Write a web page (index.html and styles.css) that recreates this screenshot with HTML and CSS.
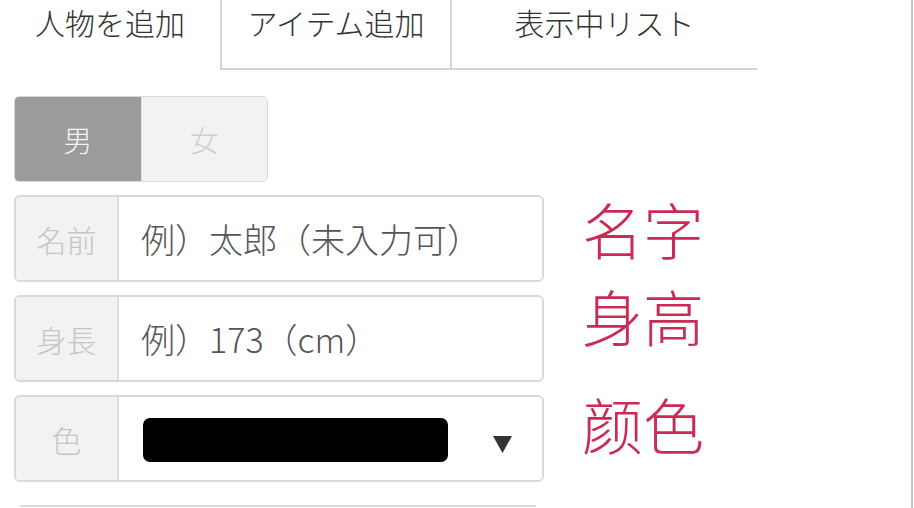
FILE: index.html
```html
<!DOCTYPE html>
<html lang="ja">
<head>
<meta charset="utf-8">
<title>人物を追加</title>
<link rel="stylesheet" href="styles.css">
</head>
<body>
<div class="page">
  <nav class="tabs">
    <div class="tab tab-active">人物を追加</div>
    <div class="tab tab-item">アイテム追加</div>
    <div class="tab tab-list">表示中リスト</div>
  </nav>

  <main class="form">
    <div class="toggle">
      <div class="seg seg-on">男</div>
      <div class="seg seg-off">女</div>
    </div>

    <div class="row">
      <div class="label">名前</div>
      <div class="field">例）太郎（未入力可）</div>
    </div>

    <div class="row">
      <div class="label">身長</div>
      <div class="field">例）173（cm）</div>
    </div>

    <div class="row">
      <div class="label">色</div>
      <div class="field field-select">
        <span class="swatch"></span>
        <svg class="caret" width="19" height="17" viewBox="0 0 19 17"><polygon points="0,0 19,0 9.5,17" fill="#333"/></svg>
      </div>
    </div>

    <div class="next"></div>
  </main>

  <div class="notes">
    <div class="note note-1" lang="zh-CN">名字</div>
    <div class="note note-2" lang="zh-CN">身高</div>
    <div class="note note-3" lang="zh-CN">颜色</div>
  </div>
</div>
</body>
</html>
```

FILE: styles.css
```css
* { box-sizing: border-box; }

html, body {
  margin: 0;
  padding: 0;
  background: #fff;
}

body {
  font-family: "Noto Sans CJK JP", "Noto Sans", sans-serif;
  font-weight: 300;
  color: #333;
}

.page {
  position: relative;
  width: 913px;
  height: 508px;
  overflow: hidden;
  border-right: 2px solid #c4c4c4;
}

/* tabs */
.tabs {
  display: flex;
  height: 70px;
}

.tab {
  font-size: 30px;
  line-height: 44px;
  text-align: center;
  color: #333;
}

.tab-active { width: 220px; }

.tab-item {
  width: 232px;
  border-left: 2px solid #d4d4d4;
  border-right: 2px solid #d4d4d4;
  border-bottom: 2px solid #d4d4d4;
}

.tab-list {
  width: 305px;
  border-bottom: 2px solid #d4d4d4;
}

/* form */
.form {
  padding-left: 14px;
  padding-top: 26px;
  display: flex;
  flex-direction: column;
  align-items: flex-start;
}

.toggle {
  display: flex;
  width: 254px;
  height: 86px;
  border: 1px solid #d8d8d8;
  border-radius: 5px;
  overflow: hidden;
}

.seg {
  flex: 1;
  display: flex;
  align-items: center;
  justify-content: center;
  font-size: 29px;
}

.seg-on {
  background: #9b9b9b;
  color: #f4f4f4;
}

.seg-off {
  background: #f2f2f2;
  color: #cfcfcf;
  border-left: 1px solid #e2e2e2;
}

.row {
  display: flex;
  width: 530px;
  height: 87px;
  margin-top: 13px;
  border: 2px solid #d9d9d9;
  border-radius: 6px;
  overflow: hidden;
}

.label {
  width: 103px;
  flex: none;
  display: flex;
  align-items: center;
  justify-content: center;
  background: #f2f2f2;
  border-right: 2px solid #dcdcdc;
  color: #c6c6c6;
  font-size: 30px;
}

.field {
  flex: 1;
  display: flex;
  align-items: center;
  padding-left: 22px;
  font-size: 34px;
  color: #555;
  background: #fff;
}

.field-select {
  padding-right: 30px;
}

.swatch {
  width: 305px;
  height: 44px;
  margin-left: 2px;
  margin-top: 3px;
  background: #000;
  border-radius: 7px;
}

.caret {
  margin-left: auto;
  margin-top: 12px;
}

.next {
  width: 516px;
  height: 20px;
  margin-top: 23px;
  margin-left: 6px;
  border-top: 2px solid #d9d9d9;
}

/* red annotations laid over the screenshot */
.notes {
  position: absolute;
  left: 582px;
  top: 0;
}

.note {
  position: absolute;
  left: 0;
  white-space: nowrap;
  font-family: "Noto Sans CJK SC", sans-serif;
  font-size: 61px;
  line-height: 61px;
  color: #c92b55;
}

.note-1 { top: 198px; }
.note-2 { top: 285px; }
.note-3 { top: 393px; }
```
